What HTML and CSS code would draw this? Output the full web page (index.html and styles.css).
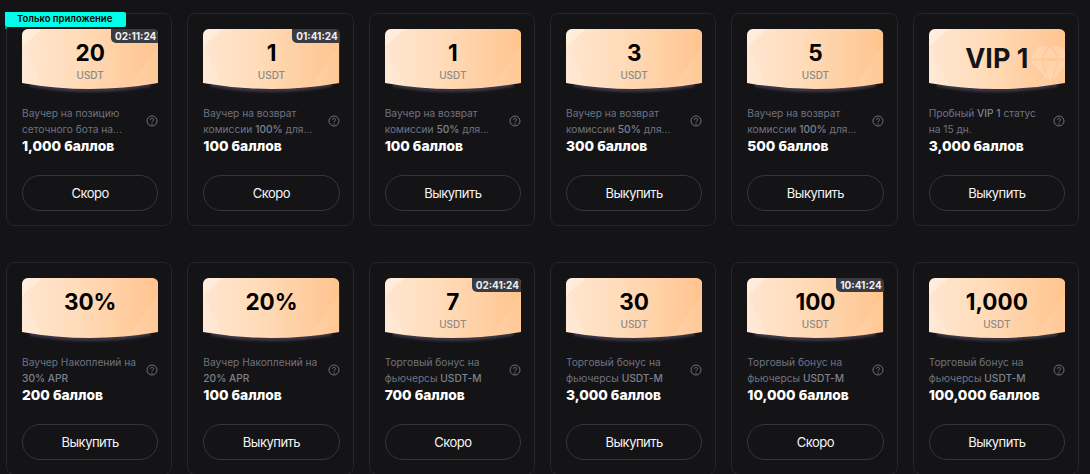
FILE: index.html
```html
<!DOCTYPE html>
<html lang="en">
<head>
  <meta charset="UTF-8">
  <title>Vouchers</title>
  <link rel="stylesheet" href="styles.css">
</head>
<body>
  <svg class="defs" width="0" height="0" aria-hidden="true">
    <defs>
      <linearGradient id="ticketFill" x1="0" y1="0" x2="1" y2="0">
        <stop offset="0" stop-color="#ffe6d0"/>
        <stop offset=".4" stop-color="#ffdcba"/>
        <stop offset="1" stop-color="#ffc48e"/>
      </linearGradient>
      <filter id="soft" x="-10%" y="-100%" width="120%" height="400%">
        <feGaussianBlur stdDeviation="1.500"/>
      </filter>
      <symbol id="ticket" viewBox="0 0 136 72" preserveAspectRatio="none">
        <path d="M8 55.500Q68 66.500 128 55.500" fill="none" stroke="#4c4258" stroke-width="3" filter="url(#soft)"/>
        <path d="M0 6A6 6 0 0 1 6 0H130A6 6 0 0 1 136 6V54Q68 66 0 54Z" fill="url(#ticketFill)"/>
        <path d="M0 18L20 56.500L0 54Z" fill="#fff" opacity=".14"/>
        <path d="M0 6A6 6 0 0 1 6 0H20L0 18Z" fill="#fff" opacity=".3"/>
        <path d="M136 16L106 58.500L136 54Z" fill="#fff" opacity=".08"/>
      </symbol>
      <symbol id="help" viewBox="0 0 12 12">
        <circle cx="6" cy="6" r="5" fill="none" stroke="currentColor"/>
        <path d="M4.500 4.800A1.500 1.500 0 1 1 6.700 6.100C6.200 6.400 6 6.700 6 7.300" fill="none" stroke="currentColor"/>
        <circle cx="6" cy="9" r=".7" fill="currentColor"/>
      </symbol>
    </defs>
  </svg>

  <div class="grid">
    <div class="card">
      <div class="app-only">Только приложение</div>
      <div class="ticket">
        <svg class="ticket-bg"><use href="#ticket"/></svg>
        <span class="timer">02:11:24</span>
        <div class="value">20</div>
        <div class="unit">USDT</div>
      </div>
      <div class="desc"><p>Ваучер на позицию сеточного бота на...</p><svg class="help"><use href="#help"/></svg></div>
      <div class="points">1,000 баллов</div>
      <button class="btn">Скоро</button>
    </div>

    <div class="card">
      <div class="ticket">
        <svg class="ticket-bg"><use href="#ticket"/></svg>
        <span class="timer">01:41:24</span>
        <div class="value">1</div>
        <div class="unit">USDT</div>
      </div>
      <div class="desc"><p>Ваучер на возврат комиссии <b>100%</b> для...</p><svg class="help"><use href="#help"/></svg></div>
      <div class="points">100 баллов</div>
      <button class="btn">Скоро</button>
    </div>

    <div class="card">
      <div class="ticket">
        <svg class="ticket-bg"><use href="#ticket"/></svg>
        <div class="value">1</div>
        <div class="unit">USDT</div>
      </div>
      <div class="desc"><p>Ваучер на возврат комиссии <b>50%</b> для...</p><svg class="help"><use href="#help"/></svg></div>
      <div class="points">100 баллов</div>
      <button class="btn">Выкупить</button>
    </div>

    <div class="card">
      <div class="ticket">
        <svg class="ticket-bg"><use href="#ticket"/></svg>
        <div class="value">3</div>
        <div class="unit">USDT</div>
      </div>
      <div class="desc"><p>Ваучер на возврат комиссии <b>50%</b> для...</p><svg class="help"><use href="#help"/></svg></div>
      <div class="points">300 баллов</div>
      <button class="btn">Выкупить</button>
    </div>

    <div class="card">
      <div class="ticket">
        <svg class="ticket-bg"><use href="#ticket"/></svg>
        <div class="value">5</div>
        <div class="unit">USDT</div>
      </div>
      <div class="desc"><p>Ваучер на возврат комиссии <b>100%</b> для...</p><svg class="help"><use href="#help"/></svg></div>
      <div class="points">500 баллов</div>
      <button class="btn">Выкупить</button>
    </div>

    <div class="card">
      <div class="ticket">
        <svg class="ticket-bg"><use href="#ticket"/></svg>
        <svg class="gem" viewBox="0 0 36 40">
          <path d="M10 1H19L12 13H2Z M21 2L29 13H13Z M23 1H32L40 13H30Z M2 16H12L19 36Z M14 16H28L21 38Z M30 16H40L23 36Z" fill="#fff" opacity=".2"/>
        </svg>
        <div class="value value-big">VIP 1</div>
      </div>
      <div class="desc"><p>Пробный <b>VIP 1</b> статус на 15 дн.</p><svg class="help"><use href="#help"/></svg></div>
      <div class="points">3,000 баллов</div>
      <button class="btn">Выкупить</button>
    </div>

    <div class="card">
      <div class="ticket">
        <svg class="ticket-bg"><use href="#ticket"/></svg>
        <div class="value">30%</div>
      </div>
      <div class="desc"><p>Ваучер Накоплений на <b>30% APR</b></p><svg class="help"><use href="#help"/></svg></div>
      <div class="points">200 баллов</div>
      <button class="btn">Выкупить</button>
    </div>

    <div class="card">
      <div class="ticket">
        <svg class="ticket-bg"><use href="#ticket"/></svg>
        <div class="value">20%</div>
      </div>
      <div class="desc"><p>Ваучер Накоплений на <b>20% APR</b></p><svg class="help"><use href="#help"/></svg></div>
      <div class="points">100 баллов</div>
      <button class="btn">Выкупить</button>
    </div>

    <div class="card">
      <div class="ticket">
        <svg class="ticket-bg"><use href="#ticket"/></svg>
        <span class="timer">02:41:24</span>
        <div class="value">7</div>
        <div class="unit">USDT</div>
      </div>
      <div class="desc"><p>Торговый бонус на фьючерсы <b>USDT-M</b></p><svg class="help"><use href="#help"/></svg></div>
      <div class="points">700 баллов</div>
      <button class="btn">Скоро</button>
    </div>

    <div class="card">
      <div class="ticket">
        <svg class="ticket-bg"><use href="#ticket"/></svg>
        <div class="value">30</div>
        <div class="unit">USDT</div>
      </div>
      <div class="desc"><p>Торговый бонус на фьючерсы <b>USDT-M</b></p><svg class="help"><use href="#help"/></svg></div>
      <div class="points">3,000 баллов</div>
      <button class="btn">Выкупить</button>
    </div>

    <div class="card">
      <div class="ticket">
        <svg class="ticket-bg"><use href="#ticket"/></svg>
        <span class="timer">10:41:24</span>
        <div class="value">100</div>
        <div class="unit">USDT</div>
      </div>
      <div class="desc"><p>Торговый бонус на фьючерсы <b>USDT-M</b></p><svg class="help"><use href="#help"/></svg></div>
      <div class="points">10,000 баллов</div>
      <button class="btn">Скоро</button>
    </div>

    <div class="card">
      <div class="ticket">
        <svg class="ticket-bg"><use href="#ticket"/></svg>
        <div class="value">1,000</div>
        <div class="unit">USDT</div>
      </div>
      <div class="desc"><p>Торговый бонус на фьючерсы <b>USDT-M</b></p><svg class="help"><use href="#help"/></svg></div>
      <div class="points">100,000 баллов</div>
      <button class="btn">Выкупить</button>
    </div>
  </div>
</body>
</html>
```

FILE: styles.css
```css
html, body {
  height: 474px;
  overflow: hidden;
}

body {
  margin: 0;
  background-color: #141417;
  font-family: Inter, "Noto Sans", sans-serif;
}

.defs {
  display: block;
}

.grid {
  display: grid;
  grid-template-columns: repeat(6, 1fr);
  column-gap: 15px;
  row-gap: 36px;
  padding: 13px 11px 0 6px;
}

.card {
  position: relative;
  height: 213px;
  box-sizing: border-box;
  padding: 15px 13px 15px 15px;
  border: 1px solid #25262a;
  border-radius: 8px;
}

.app-only {
  position: absolute;
  top: -2px;
  left: -2px;
  width: 121px;
  height: 15px;
  padding-left: 12px;
  box-sizing: border-box;
  background-color: #00ffe8;
  border-radius: 0 2px 2px 2px;
  color: #000;
  font-size: 9.500px;
  font-weight: 600;
  line-height: 14px;
}

.app-only::after {
  content: "";
  position: absolute;
  top: 15px;
  left: 0;
  width: 2px;
  height: 2px;
  background-color: #0a8f86;
}

.ticket {
  position: relative;
  height: 72px;
  text-align: center;
  margin-bottom: 4px;
}

.ticket-bg {
  position: absolute;
  top: 0;
  left: 0;
  width: 100%;
  height: 72px;
}

.gem {
  position: absolute;
  top: 16px;
  right: 0;
  width: 36px;
  height: 40px;
}

.timer {
  position: absolute;
  top: 0;
  right: 0;
  height: 14px;
  padding: 0 2px 0 4px;
  background-color: #3a3c44;
  border-radius: 0 5px 0 5px;
  color: #f0f0f0;
  font-size: 10px;
  font-weight: 700;
  line-height: 14px;
}

.value {
  position: relative;
  padding-top: 10px;
  color: #000;
  font-size: 22.500px;
  font-weight: 700;
  line-height: 28px;
}

.value-big {
  padding-top: 16px;
  font-size: 27px;
  color: #14141a;
}

.unit {
  position: relative;
  color: #8e8a86;
  font-size: 10px;
  font-weight: 500;
  line-height: 16px;
}

.desc {
  display: flex;
  align-items: center;
  justify-content: space-between;
  height: 32px;
}

.desc p {
  margin: 0;
  width: 116px;
  color: #6f7380;
  font-size: 10.200px;
  line-height: 16px;
}

.desc b {
  font-weight: 500;
  color: #7d818d;
}

.help {
  width: 12px;
  height: 12px;
  color: #6f7074;
}

.points {
  color: #fff;
  font-size: 13.800px;
  font-weight: 800;
  line-height: 18px;
}

.btn {
  display: block;
  width: 100%;
  height: 36px;
  margin-top: 20px;
  background: none;
  border: 1px solid #35363b;
  border-radius: 18px;
  color: #f4f4f4;
  font-family: inherit;
  font-size: 13px;
  letter-spacing: -0.5px;
}
```
